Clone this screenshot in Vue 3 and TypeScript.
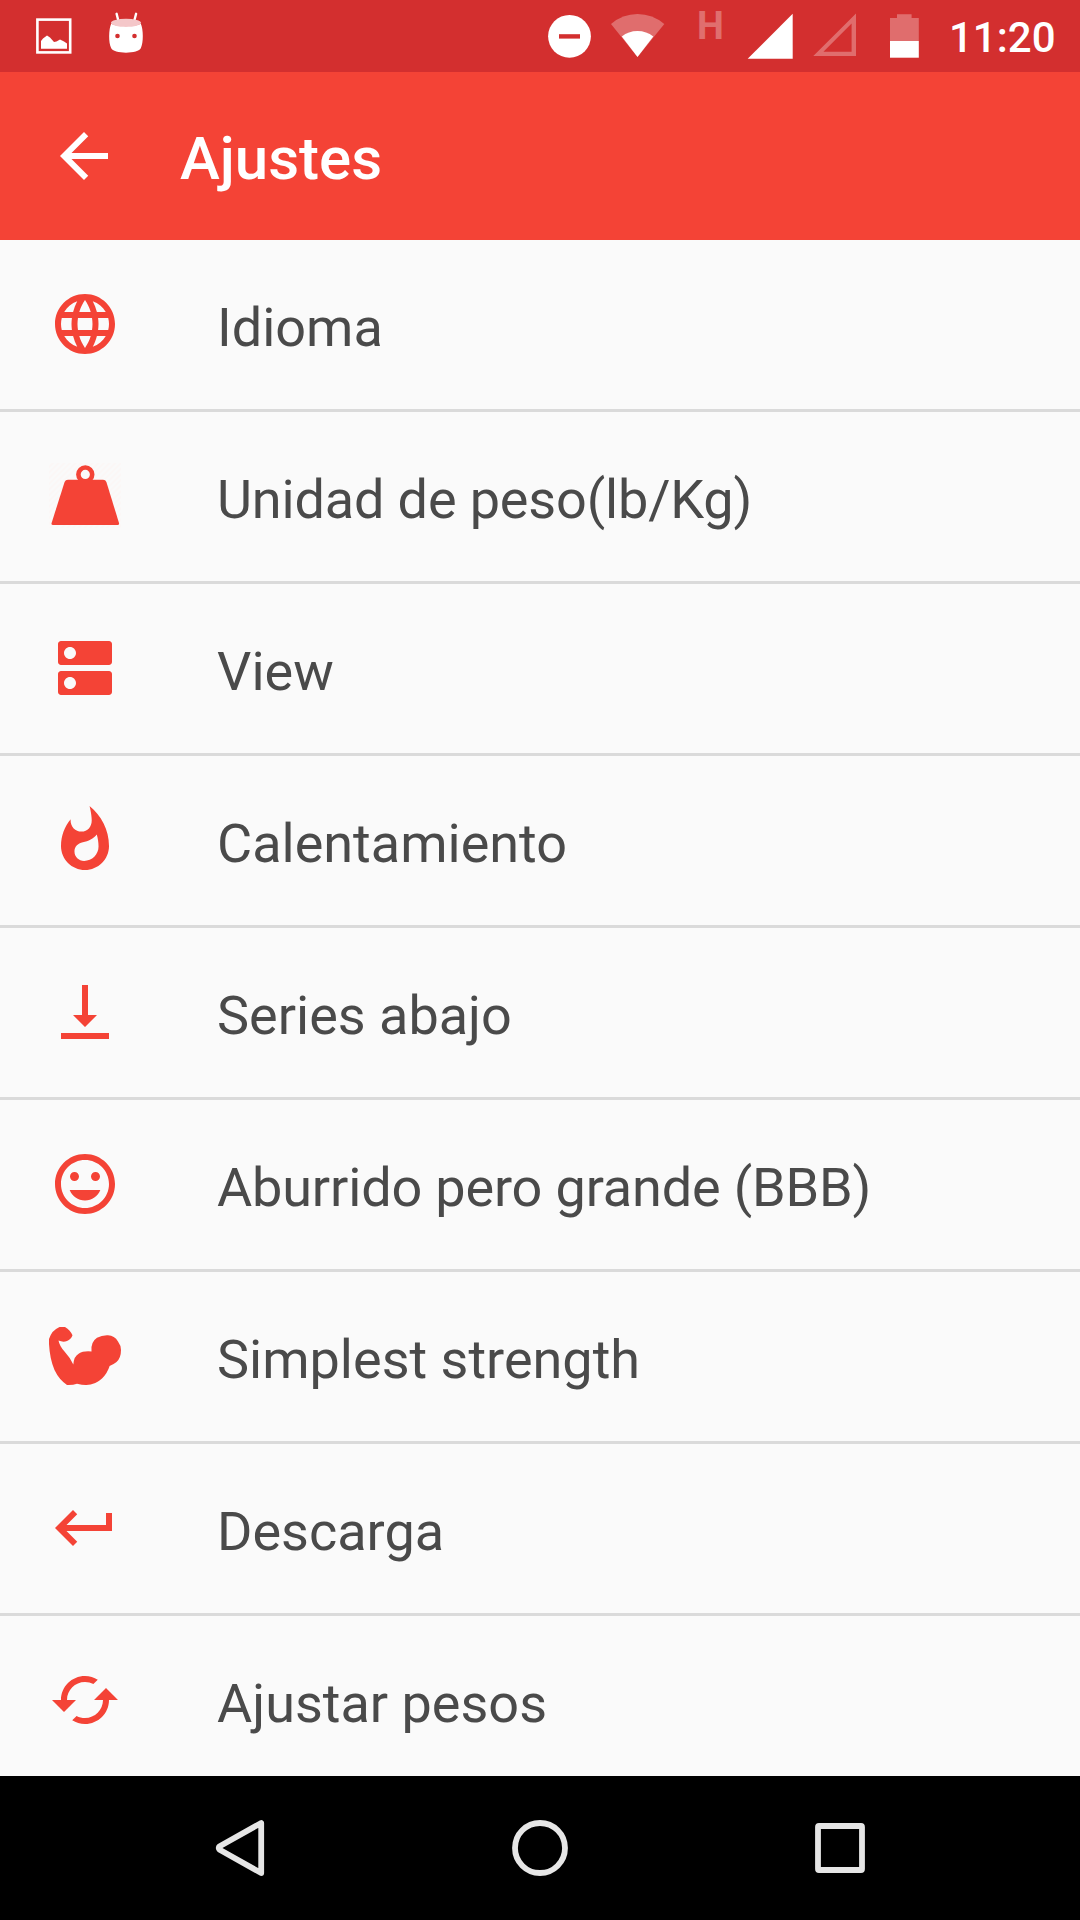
<script setup lang="ts">
interface Setting {
  label: string
  icon: string
  path?: string
  dense?: boolean
}

const settings: Setting[] = [
  {
    label: 'Idioma',
    icon: 'language',
    path: 'M11.99 2C6.47 2 2 6.48 2 12s4.47 10 9.99 10C17.52 22 22 17.52 22 12S17.52 2 11.99 2zm6.93 6h-2.95c-.32-1.25-.78-2.45-1.38-3.56 1.84.63 3.37 1.91 4.33 3.56zM12 4.04c.83 1.2 1.48 2.53 1.91 3.96h-3.82c.43-1.43 1.08-2.76 1.91-3.96zM4.26 14C4.1 13.36 4 12.69 4 12s.1-1.36.26-2h3.38c-.08.66-.14 1.32-.14 2 0 .68.06 1.34.14 2H4.26zm.82 2h2.95c.32 1.25.78 2.45 1.38 3.56-1.84-.63-3.37-1.9-4.33-3.56zm2.95-8H5.08c.96-1.66 2.49-2.93 4.33-3.56C8.81 5.55 8.35 6.75 8.03 8zM12 19.96c-.83-1.2-1.48-2.53-1.91-3.96h3.82c-.43 1.43-1.08 2.76-1.91 3.96zM14.34 14H9.66c-.09-.66-.16-1.32-.16-2 0-.68.07-1.35.16-2h4.68c.09.65.16 1.32.16 2 0 .68-.07 1.34-.16 2zm.25 5.56c.6-1.11 1.06-2.31 1.38-3.56h2.95c-.96 1.65-2.49 2.93-4.33 3.56zM16.36 14c.08-.66.14-1.32.14-2 0-.68-.06-1.34-.14-2h3.38c.16.64.26 1.31.26 2s-.1 1.36-.26 2h-3.38z',
  },
  { label: 'Unidad de peso(lb/Kg)', icon: 'weight', dense: true },
  {
    label: 'View',
    icon: 'dns',
    path: 'M20 13H4c-.55 0-1 .45-1 1v6c0 .55.45 1 1 1h16c.55 0 1-.45 1-1v-6c0-.55-.45-1-1-1zM7 19c-1.1 0-2-.9-2-2s.9-2 2-2 2 .9 2 2-.9 2-2 2zM20 3H4c-.55 0-1 .45-1 1v6c0 .55.45 1 1 1h16c.55 0 1-.45 1-1V4c0-.55-.45-1-1-1zM7 9c-1.1 0-2-.9-2-2s.9-2 2-2 2 .9 2 2-.9 2-2 2z',
  },
  {
    label: 'Calentamiento',
    icon: 'whatshot',
    path: 'M13.5.67s.74 2.65.74 4.8c0 2.06-1.35 3.73-3.41 3.73-2.07 0-3.63-1.67-3.63-3.73l.03-.36C5.21 7.51 4 10.62 4 14c0 4.42 3.58 8 8 8s8-3.58 8-8C20 8.61 17.41 3.8 13.5.67zM11.71 19c-1.78 0-3.22-1.4-3.22-3.14 0-1.62 1.05-2.76 2.81-3.12 1.77-.36 3.6-1.21 4.62-2.58.39 1.29.59 2.65.59 4.04 0 2.65-2.15 4.8-4.8 4.8z',
  },
  {
    label: 'Series abajo',
    icon: 'align-bottom',
    path: 'M16 13h-3V3h-2v10H8l4 4 4-4zM4 19v2h16v-2H4z',
  },
  {
    label: 'Aburrido pero grande (BBB)',
    icon: 'emoticon',
    path: 'M11.99 2C6.47 2 2 6.48 2 12s4.47 10 9.99 10C17.52 22 22 17.52 22 12S17.52 2 11.99 2zM12 20c-4.42 0-8-3.58-8-8s3.58-8 8-8 8 3.58 8 8-3.58 8-8 8zm3.5-9c.83 0 1.5-.67 1.5-1.5S16.33 8 15.5 8 14 8.67 14 9.5s.67 1.5 1.5 1.5zm-7 0c.83 0 1.5-.67 1.5-1.5S9.33 8 8.5 8 7 8.67 7 9.5 7.67 11 8.5 11zm3.5 6.5c2.33 0 4.31-1.46 5.11-3.5H6.89c.8 2.04 2.78 3.5 5.11 3.5z',
    dense: true,
  },
  { label: 'Simplest strength', icon: 'muscle' },
  {
    label: 'Descarga',
    icon: 'return',
    path: 'M19 7v4H5.83l3.58-3.59L8 6l-6 6 6 6 1.41-1.41L5.83 13H21V7z',
  },
  {
    label: 'Ajustar pesos',
    icon: 'cached',
    path: 'M19 8l-4 4h3c0 3.31-2.69 6-6 6-1.01 0-1.97-.25-2.8-.7l-1.46 1.46C8.97 19.54 10.43 20 12 20c4.42 0 8-3.58 8-8h3l-4-4zM6 12c0-3.31 2.69-6 6-6 1.01 0 1.97.25 2.8.7l1.46-1.46C15.03 4.46 13.57 4 12 4c-4.42 0-8 3.58-8 8H1l4 4 4-4H6z',
  },
]
</script>

<template>
  <div class="screen">
    <header class="status-bar">
      <div class="notifications">
        <svg class="glyph" width="36" height="72" viewBox="36 0 36 72">
          <rect x="37.4" y="19.6" width="32.8" height="32.8" fill="none" stroke="#fff" stroke-width="2.6" />
          <path d="M41 41l2-2.6 4-3 3 2.2 4 4.4 2.5-.6 3.5-2 4 2 3 2v5.4H41z" fill="#fff" />
        </svg>
        <svg class="glyph" width="36" height="72" viewBox="108 0 36 72">
          <path d="M116.6 13.8l2 8M136.1 13.8l-2.1 8" stroke="#fff" stroke-width="2.4" stroke-linecap="round" />
          <path d="M111.3 23.5c3 3.5 26.4 3.5 29.4 0 2.8 6 2.8 19 .2 24.5-2 6.2-27.800 6.2-29.8 0-2.600-5.500-2.600-18.500.2-24.500z" fill="#fff" />
          <ellipse cx="126" cy="22.8" rx="15" ry="4" fill="#f4c7c9" />
          <circle cx="117.5" cy="36" r="2.3" fill="#d32f2f" />
          <circle cx="134.5" cy="36" r="2.3" fill="#d32f2f" />
        </svg>
      </div>
      <div class="system">
        <svg class="glyph" width="44" height="72" viewBox="548 0 44 72">
          <circle cx="569.5" cy="36.3" r="21.4" fill="#fff" />
          <rect x="559" y="34.2" width="21" height="4.4" fill="#d32f2f" />
        </svg>
        <svg class="glyph" width="54" height="72" viewBox="611 0 54 72">
          <path d="M611 24Q622.5 14 637.5 14T664.3 24L637.5 57z" fill="#fff" opacity=".3" />
          <path d="M621.8 36.5Q628.5 31 637.5 31T653.3 36.5L637.5 57z" fill="#fff" />
        </svg>
        <span class="network">H</span>
        <svg class="glyph" width="46" height="72" viewBox="747 0 46 72">
          <path d="M792.7 13.8v45h-45z" fill="#fff" />
        </svg>
        <svg class="glyph" width="43" height="72" viewBox="813 0 43 72">
          <path d="M856 13.5V56h-42.7zM851.6 23.5v28.2h-28.2z" fill="#fff" fill-rule="evenodd" opacity=".3" />
        </svg>
        <svg class="glyph" width="30" height="72" viewBox="890 0 30 72">
          <path d="M890 41V18h7v-3.7h14.6V18h7.2v23z" fill="#fff" opacity=".3" />
          <rect x="890" y="41" width="28.8" height="16.7" fill="#fff" />
        </svg>
        <span class="clock">11:20</span>
      </div>
    </header>

    <div class="app-bar">
      <svg class="back" width="72" height="72" viewBox="0 0 24 24" fill="#fff">
        <path d="M20 11H7.83l5.59-5.59L12 4l-8 8 8 8 1.41-1.41L7.83 13H20v-2z" />
      </svg>
      <h1 class="title">Ajustes</h1>
    </div>

    <ul class="settings">
      <li v-for="item in settings" :key="item.label" class="row">
        <svg v-if="item.path" class="icon" viewBox="0 0 24 24">
          <path :d="item.path" />
        </svg>
        <svg v-else-if="item.icon === 'weight'" class="icon" viewBox="0 0 72 72">
          <defs>
            <pattern id="hatch" width="4" height="4" patternUnits="userSpaceOnUse" patternTransform="rotate(45)">
              <rect width="2" height="4" fill="#fbf7f6" />
            </pattern>
          </defs>
          <rect y="3" width="72" height="65" fill="url(#hatch)" />
          <circle cx="36.3" cy="14.4" r="6.9" fill="#fafafa" stroke="#f44336" stroke-width="4.6" />
          <path d="M19 19.8h35q2.6 0 3.4 2.2l12.6 41q.5 2-1.5 2H4q-2 0-1.4-2L15.6 22q.8-2.2 3.4-2.2z" />
        </svg>
        <svg v-else class="icon" viewBox="0 0 72 72">
          <path d="M10.5 7h5.5Q21.5 10.5 23.5 15.3 22 19.5 18 21 14 22.5 9.500 20.500 10.500 26 15.500 31.500 21.500 38 24.300 44.500 25 36 30 33.500 34 30.800 42.500 31.500 41.500 22 48 17.800 53 15 59 15.300 65.500 15.500 69 21.500 72 25.500 72 30 72 38 67.500 42 64 44.800 60.600 46 58.500 53 53 58.500 46 65 37.500 65 34 65.200 28 63.800 24 65.200 18 65 10 59.500 5.500 50 .8 39 0 24V19Q3 10 10.500 7z" />
        </svg>
        <span class="label" :class="{ dense: item.dense }">{{ item.label }}</span>
      </li>
    </ul>

    <nav class="nav-bar">
      <svg width="60" height="60" viewBox="0 0 60 60">
        <path d="M51.200 5v50L9.700 31.800q-2-1.800 0-3.600z" />
      </svg>
      <svg width="60" height="60" viewBox="0 0 60 60">
        <circle cx="30" cy="30" r="25" />
      </svg>
      <svg width="60" height="60" viewBox="0 0 60 60">
        <rect x="8" y="8" width="44" height="44" rx="1" />
      </svg>
    </nav>
  </div>
</template>

<style>
body {
  margin: 0;
}
</style>

<style scoped>
.screen {
  display: flex;
  flex-direction: column;
  width: 1080px;
  height: 1920px;
  overflow: hidden;
  background: #fafafa;
  font-family: Roboto, sans-serif;
}

.status-bar {
  display: flex;
  justify-content: space-between;
  box-sizing: border-box;
  flex: none;
  height: 72px;
  padding: 0 24px 0 36px;
  background: #d32f2f;
  color: #fff;
}

.notifications {
  display: flex;
  gap: 36px;
}

.system {
  display: flex;
}

.glyph {
  flex: none;
  display: block;
}

.system .glyph:first-child {
  margin-right: 19px;
}

.network {
  width: 50px;
  margin: 3px 0 0 32px;
  font-size: 38px;
  font-weight: 700;
  line-height: 46px;
  opacity: 0.3;
}

.network + .glyph {
  margin-right: 20px;
}

.network + .glyph + .glyph {
  margin-right: 34px;
}

.clock {
  width: 107px;
  margin-left: 29px;
  font-size: 42px;
  font-weight: 500;
  line-height: 76px;
  white-space: nowrap;
}

.app-bar {
  display: flex;
  align-items: center;
  flex: none;
  height: 168px;
  padding-left: 48px;
  background: #f44336;
}

.title {
  margin: 6px 0 0 60px;
  color: #fff;
  font-size: 60px;
  font-weight: 500;
  line-height: 72px;
}

.settings {
  flex: 1;
  min-height: 0;
  margin: 0;
  padding: 0;
  overflow: hidden;
  list-style: none;
}

.row {
  display: flex;
  box-sizing: border-box;
  height: 172px;
  padding: 48px 0 0 49px;
  border-bottom: 3px solid #dadada;
}

.icon {
  flex: none;
  width: 72px;
  height: 72px;
  fill: #f44336;
}

.label {
  margin: 4px 0 0 96px;
  color: #4a4a4a;
  font-size: 54px;
  line-height: 72px;
  white-space: nowrap;
}

.label.dense {
  letter-spacing: -0.15px;
}

.nav-bar {
  display: flex;
  justify-content: center;
  align-items: center;
  gap: 240px;
  flex: none;
  height: 144px;
  background: #000;
}

.nav-bar svg {
  fill: none;
  stroke: #e6e6e6;
  stroke-width: 5.8;
  stroke-linejoin: round;
}
</style>
